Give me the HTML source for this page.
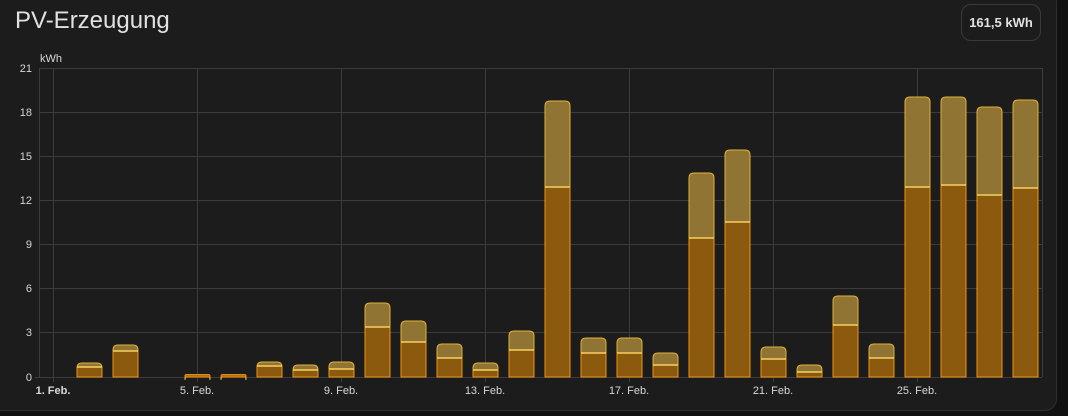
<!DOCTYPE html>
<html><head><meta charset="utf-8"><style>
html,body{margin:0;padding:0;background:#111;width:1068px;height:416px;overflow:hidden}
.card{position:absolute;left:-10px;top:-10px;width:1067px;height:421px;background:#1c1c1c;border:1px solid #2e2e2e;border-radius:12px;box-sizing:border-box}
.title{position:absolute;left:15px;top:7px;font:24px "Liberation Sans",sans-serif;color:#e1e1e1}
.badge{position:absolute;left:961px;top:4px;width:80px;height:37px;border:1px solid #3a3a3a;border-radius:10px;box-sizing:border-box;font:bold 13px "Liberation Sans",sans-serif;color:#e1e1e1;text-align:center;line-height:35px}
svg{position:absolute;left:0;top:0}
text{font-family:"Liberation Sans",sans-serif;font-size:11px;fill:#d8d8d8}
</style></head><body>
<div class="card"></div>
<div class="title">PV-Erzeugung</div>
<div class="badge">161,5 kWh</div>
<svg width="1068" height="416" id="s">
<g stroke="#3c3c3c" stroke-width="1">
<line x1="39" y1="68.5" x2="1042" y2="68.5"/><line x1="39" y1="112.5" x2="1042" y2="112.5"/>
<line x1="39" y1="156.5" x2="1042" y2="156.5"/><line x1="39" y1="200.5" x2="1042" y2="200.5"/>
<line x1="39" y1="244.5" x2="1042" y2="244.5"/><line x1="39" y1="288.5" x2="1042" y2="288.5"/>
<line x1="39" y1="332.5" x2="1042" y2="332.5"/><line x1="35" y1="377.5" x2="1042" y2="377.5"/>
<line x1="39.5" y1="68" x2="39.5" y2="377"/><line x1="1042.5" y1="68" x2="1042.5" y2="377"/>
<line x1="53.5" y1="68" x2="53.5" y2="382"/><line x1="197.5" y1="68" x2="197.5" y2="382"/>
<line x1="341.5" y1="68" x2="341.5" y2="382"/><line x1="485.5" y1="68" x2="485.5" y2="382"/>
<line x1="629.5" y1="68" x2="629.5" y2="382"/><line x1="773.5" y1="68" x2="773.5" y2="382"/>
<line x1="917.5" y1="68" x2="917.5" y2="382"/>
</g>
<text x="40" y="62">kWh</text>
<g text-anchor="end">
<text x="32" y="72">21</text><text x="32" y="116">18</text><text x="32" y="160">15</text>
<text x="32" y="204">12</text><text x="32" y="248">9</text><text x="32" y="292">6</text>
<text x="32" y="336">3</text><text x="32" y="381">0</text>
</g>
<g text-anchor="middle">
<text x="53" y="394" style="font-weight:bold">1. Feb.</text><text x="197" y="394">5. Feb.</text>
<text x="341" y="394">9. Feb.</text><text x="485" y="394">13. Feb.</text>
<text x="629" y="394">17. Feb.</text><text x="773" y="394">21. Feb.</text>
<text x="917" y="394">25. Feb.</text>
</g>
<g id="bars"></g>
</svg>
<script>
var d=[null,[363,367],[345,351],null,[375,375],[375,375],[362,366],[365,370],[362,369],[303,327],[321,342],[344,358],[363,370],[331,350],[101,187],[338,353],[338,353],[353,365],[173,238],[150,222],[347,359],[365,372],[296,325],[344,358],[97,187],[97,185],[107,195],[100,188]];
var h='';
for(var i=0;i<28;i++){var v=d[i];if(!v)continue;var cx=53.5+36*i,x=cx-12.5,w=25;
var t=v[0],l=v[1];
h+='<path d="M'+x+' 377V'+(t+5)+'Q'+x+' '+t+' '+(x+5)+' '+t+'H'+(x+w-5)+'Q'+(x+w)+' '+t+' '+(x+w)+' '+(t+5)+'V377Z" fill="#8f7434" stroke="#e2b13a" stroke-width="1"/>';
if(l>t)h+='<rect x="'+x+'" y="'+l+'" width="'+w+'" height="'+(377-l)+'" fill="#8c5a0f" stroke="#f0930f" stroke-width="1"/><line x1="'+x+'" x2="'+(x+w)+'" y1="'+l+'" y2="'+l+'" stroke="#f7d060" stroke-width="1.5"/>';
else h+='<rect x="'+x+'" y="'+(l-0.5)+'" width="'+w+'" height="'+(377.5-l)+'" rx="1.5" fill="#b06f10" stroke="#e88a0c" stroke-width="1"/>';
}
document.getElementById('bars').innerHTML=h;
</script>
</body></html>
